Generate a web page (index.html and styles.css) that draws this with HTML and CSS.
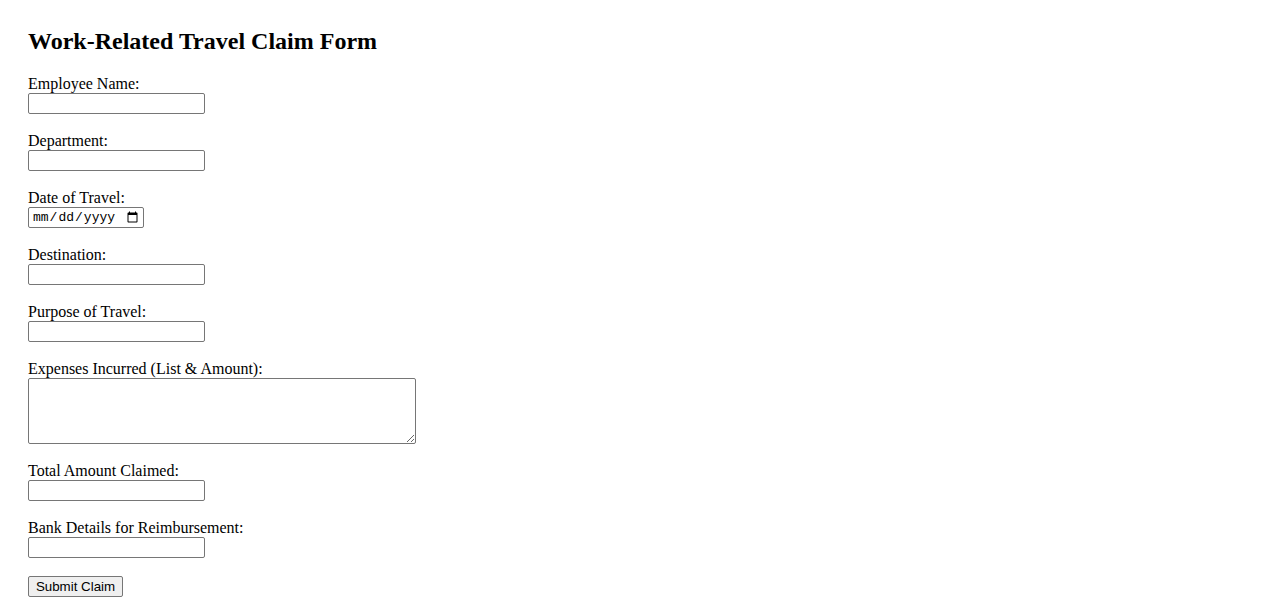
FILE: index.html
```html
<!DOCTYPE html>
<html lang="en">
<head>
<meta charset="utf-8">
<title>Work-Related Travel Claim Form</title>
<link rel="stylesheet" href="styles.css">
</head>
<body>
<div class="page">
  <h2 class="title">Work-Related Travel Claim Form</h2>
  <form class="claim-form">
    <div class="field">
      <label class="field-label" for="name">Employee Name:</label>
      <input class="text-input" type="text" id="name">
    </div>
    <div class="field">
      <label class="field-label" for="dept">Department:</label>
      <input class="text-input" type="text" id="dept">
    </div>
    <div class="field">
      <label class="field-label" for="date">Date of Travel:</label>
      <input class="date-input" type="date" id="date">
    </div>
    <div class="field">
      <label class="field-label" for="dest">Destination:</label>
      <input class="text-input" type="text" id="dest">
    </div>
    <div class="field">
      <label class="field-label" for="purpose">Purpose of Travel:</label>
      <input class="text-input" type="text" id="purpose">
    </div>
    <div class="field">
      <label class="field-label" for="expenses">Expenses Incurred (List &amp; Amount):</label>
      <textarea class="area-input" id="expenses"></textarea>
    </div>
    <div class="field">
      <label class="field-label" for="total">Total Amount Claimed:</label>
      <input class="text-input" type="text" id="total">
    </div>
    <div class="field">
      <label class="field-label" for="bank">Bank Details for Reimbursement:</label>
      <input class="text-input" type="text" id="bank">
    </div>
    <div class="actions">
      <button class="submit-btn" type="submit">Submit Claim</button>
    </div>
  </form>
</div>
</body>
</html>
```
FILE: styles.css
```css
html, body {
  margin: 0;
  padding: 0;
  background: #ffffff;
}

body {
  font-family: "Liberation Serif", "Times New Roman", serif;
  font-size: 16px;
  color: #000000;
}

.page {
  padding: 28px 28px 0 28px;
}

.title {
  margin: 0 0 20px 0;
  font-size: 24px;
  font-weight: bold;
  line-height: 27px;
}

.claim-form {
  display: flex;
  flex-direction: column;
  align-items: flex-start;
}

.field {
  display: flex;
  flex-direction: column;
  align-items: flex-start;
  margin-bottom: 18px;
}

.field-label {
  display: block;
  height: 18px;
  line-height: 18px;
}

.text-input,
.date-input,
.area-input {
  box-sizing: border-box;
  margin: 0;
  border: 1px solid #767676;
  border-radius: 2px;
  background: #ffffff;
  font-family: "Liberation Sans", Arial, sans-serif;
  font-size: 13.33px;
}

.text-input {
  width: 177px;
  height: 21px;
  padding: 1px 2px;
}

.date-input {
  width: 116px;
  height: 21px;
  padding: 0 2px 0 3px;
  font-family: "Liberation Mono", "Courier New", monospace;
  font-size: 13px;
}

.area-input {
  width: 388px;
  height: 66px;
  padding: 2px;
  resize: both;
}

.submit-btn {
  box-sizing: border-box;
  width: 95px;
  height: 21px;
  margin: 0;
  padding: 1px 6px;
  border: 1px solid #767676;
  border-radius: 2px;
  background: #efefef;
  color: #000000;
  font-family: "Liberation Sans", Arial, sans-serif;
  font-size: 13.33px;
  line-height: 17px;
}
```
